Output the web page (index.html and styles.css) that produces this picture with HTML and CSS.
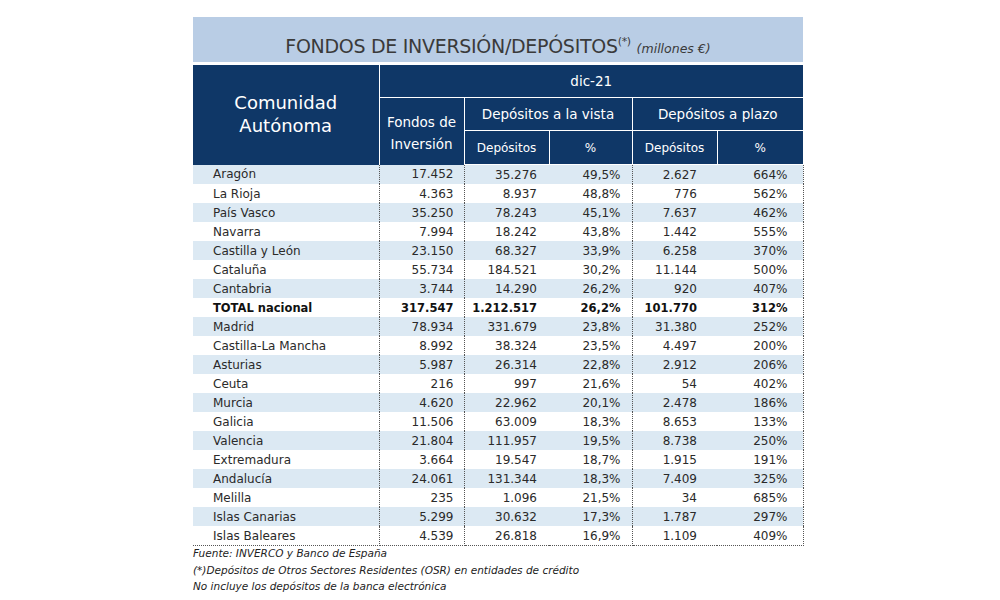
FILE: index.html
```html
<!DOCTYPE html>
<html lang="es">
<head>
    <meta charset="UTF-8">
    <meta name="viewport" content="width=device-width, initial-scale=1.0">
    <title>Fondos de inversión / Depósitos</title>
    <link rel="stylesheet" href="styles.css">
</head>
<body>
    <div class="sheet">
        <div class="title-bar">
            FONDOS DE INVERSIÓN/DEPÓSITOS<sup>(*)</sup> <em>(millones €)</em>
        </div>

        <table class="data">
            <colgroup>
                <col class="c-name">
                <col class="c-fondos">
                <col class="c-dep">
                <col class="c-pct">
                <col class="c-dep2">
                <col class="c-pct2">
            </colgroup>
            <thead>
                <tr class="h1">
                    <th rowspan="3" class="h-name">Comunidad<br>Autónoma</th>
                    <th colspan="5">dic-21</th>
                </tr>
                <tr class="h2">
                    <th rowspan="2" class="h-fondos">Fondos de<br>Inversión</th>
                    <th colspan="2">Depósitos a la vista</th>
                    <th colspan="2">Depósitos a plazo</th>
                </tr>
                <tr class="h3">
                    <th>Depósitos</th>
                    <th>%</th>
                    <th>Depósitos</th>
                    <th>%</th>
                </tr>
            </thead>
            <tbody>
                <tr><td>Aragón</td><td>17.452</td><td>35.276</td><td>49,5%</td><td>2.627</td><td>664%</td></tr>
                <tr><td>La Rioja</td><td>4.363</td><td>8.937</td><td>48,8%</td><td>776</td><td>562%</td></tr>
                <tr><td>País Vasco</td><td>35.250</td><td>78.243</td><td>45,1%</td><td>7.637</td><td>462%</td></tr>
                <tr><td>Navarra</td><td>7.994</td><td>18.242</td><td>43,8%</td><td>1.442</td><td>555%</td></tr>
                <tr><td>Castilla y León</td><td>23.150</td><td>68.327</td><td>33,9%</td><td>6.258</td><td>370%</td></tr>
                <tr><td>Cataluña</td><td>55.734</td><td>184.521</td><td>30,2%</td><td>11.144</td><td>500%</td></tr>
                <tr><td>Cantabria</td><td>3.744</td><td>14.290</td><td>26,2%</td><td>920</td><td>407%</td></tr>
                <tr class="total"><td>TOTAL nacional</td><td>317.547</td><td>1.212.517</td><td>26,2%</td><td>101.770</td><td>312%</td></tr>
                <tr><td>Madrid</td><td>78.934</td><td>331.679</td><td>23,8%</td><td>31.380</td><td>252%</td></tr>
                <tr><td>Castilla-La Mancha</td><td>8.992</td><td>38.324</td><td>23,5%</td><td>4.497</td><td>200%</td></tr>
                <tr><td>Asturias</td><td>5.987</td><td>26.314</td><td>22,8%</td><td>2.912</td><td>206%</td></tr>
                <tr><td>Ceuta</td><td>216</td><td>997</td><td>21,6%</td><td>54</td><td>402%</td></tr>
                <tr><td>Murcia</td><td>4.620</td><td>22.962</td><td>20,1%</td><td>2.478</td><td>186%</td></tr>
                <tr><td>Galicia</td><td>11.506</td><td>63.009</td><td>18,3%</td><td>8.653</td><td>133%</td></tr>
                <tr><td>Valencia</td><td>21.804</td><td>111.957</td><td>19,5%</td><td>8.738</td><td>250%</td></tr>
                <tr><td>Extremadura</td><td>3.664</td><td>19.547</td><td>18,7%</td><td>1.915</td><td>191%</td></tr>
                <tr><td>Andalucía</td><td>24.061</td><td>131.344</td><td>18,3%</td><td>7.409</td><td>325%</td></tr>
                <tr><td>Melilla</td><td>235</td><td>1.096</td><td>21,5%</td><td>34</td><td>685%</td></tr>
                <tr><td>Islas Canarias</td><td>5.299</td><td>30.632</td><td>17,3%</td><td>1.787</td><td>297%</td></tr>
                <tr><td>Islas Baleares</td><td>4.539</td><td>26.818</td><td>16,9%</td><td>1.109</td><td>409%</td></tr>
            </tbody>
        </table>

        <div class="notes">
            <p>Fuente: INVERCO y Banco de España</p>
            <p>(*)Depósitos de Otros Sectores Residentes (OSR) en entidades de crédito</p>
            <p>No incluye los depósitos de la banca electrónica</p>
        </div>
    </div>
</body>
</html>
```

FILE: styles.css
```css
body {
    margin: 0;
    padding: 0;
    background: #fff;
    font-family: 'DejaVu Sans', 'Liberation Sans', sans-serif;
    color: #222;
}

.sheet {
    width: 610px;
    margin: 17px 0 0 193px;
}

.title-bar {
    height: 45px;
    line-height: 51px;
    background-color: #b9cde5;
    text-align: center;
    font-size: 19px;
    font-weight: normal;
    letter-spacing: -0.3px;
    color: #3a3a3a;
    white-space: nowrap;
}

.title-bar sup {
    font-size: 11px;
    position: relative;
    top: -1px;
}

.title-bar em {
    font-size: 12.5px;
    letter-spacing: 0;
}

.data {
    width: 610px;
    margin-top: 3px;
    border-collapse: collapse;
    table-layout: fixed;
}

.c-name { width: 186px; }
.c-fondos { width: 85px; }
.c-dep { width: 85px; }
.c-pct { width: 83px; }
.c-dep2 { width: 85px; }
.c-pct2 { width: 86px; }

/* header */

.data th {
    background-color: #0f3767;
    color: #fff;
    font-weight: normal;
    border: 1px solid #fff;
    padding: 0;
    font-size: 13.5px;
}

.data thead tr:first-child th {
    border-top: none;
}

.data th:first-child {
    border-left: none;
}

.data tr.h1 th:last-child,
.data tr.h2 th:last-child,
.data tr.h3 th:last-child {
    border-right: none;
}

.data tr.h3 th:first-child {
    border-left: 1px solid #fff;
}

.h1 th { height: 32px; }
.h2 th { height: 32px; }
.h3 th { height: 33px; font-size: 12px; }

.data th.h-name {
    font-size: 18px;
    line-height: 23px;
    padding-bottom: 2px;
    border-bottom: none;
}

.data th.h-fondos {
    line-height: 22px;
    padding-top: 3px;
    border-bottom: none;
}

/* body */

.data td {
    height: 19px;
    padding: 0;
    font-size: 12px;
    text-align: right;
    white-space: nowrap;
    color: #2a2a2a;
}

.data tbody tr:nth-child(odd) td {
    background-color: #dce9f3;
}

.data td:nth-child(1) {
    text-align: left;
    padding-left: 20px;
}

.data td:nth-child(2) { padding-right: 10px; }
.data td:nth-child(3) { padding-right: 12px; }
.data td:nth-child(4) { padding-right: 11px; }
.data td:nth-child(5) { padding-right: 20px; }
.data td:nth-child(6) { padding-right: 15px; }

.data td:nth-child(1),
.data td:nth-child(2),
.data td:nth-child(4),
.data td:nth-child(6) {
    border-right: 1px dotted #555;
}

.data tbody tr:last-child td {
    border-bottom: 1px dotted #555;
}

.data tr.total td {
    font-weight: bold;
    font-size: 11.5px;
    color: #111;
}

/* notes */

.notes {
    margin-top: -1px;
    font-size: 10.5px;
    font-style: italic;
    color: #222;
}

.notes p {
    margin: 0;
    line-height: 16.5px;
}
```
